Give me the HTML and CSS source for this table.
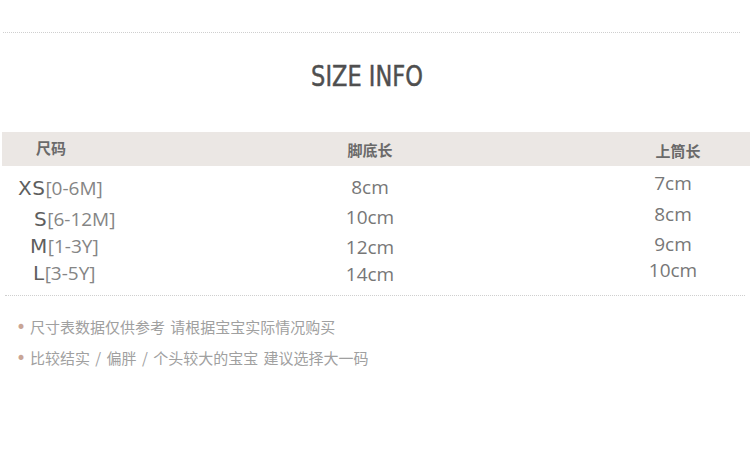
FILE: index.html
```html
<!DOCTYPE html>
<html lang="zh">
<head>
<meta charset="utf-8">
<link rel="stylesheet" href="styles.css">
</head>
<body>
<div class="page">
  <div class="rule rule-top"></div>
  <h1 class="title">SIZE INFO</h1>
  <div class="head">
    <div class="hc hc1">尺码</div>
    <div class="hc hc2">脚底长</div>
    <div class="hc hc3">上筒长</div>
  </div>
  <div class="body">
    <div class="col col1">
      <div class="cell i1"><span class="sz">XS</span><span class="age">[0-6M]</span></div>
      <div class="cell i2"><span class="sz">S</span><span class="age">[6-12M]</span></div>
      <div class="cell i3"><span class="sz">M</span><span class="age">[1-3Y]</span></div>
      <div class="cell i4"><span class="sz">L</span><span class="age">[3-5Y]</span></div>
    </div>
    <div class="col col2">
      <div class="cell">8cm</div>
      <div class="cell">10cm</div>
      <div class="cell">12cm</div>
      <div class="cell last">14cm</div>
    </div>
    <div class="col col3">
      <div class="cell first">7cm</div>
      <div class="cell">8cm</div>
      <div class="cell">9cm</div>
      <div class="cell last">10cm</div>
    </div>
  </div>
  <div class="rule rule-bottom"></div>
  <ul class="notes">
    <li><span class="dot">•</span>尺寸表数据仅供参考 请根据宝宝实际情况购买</li>
    <li><span class="dot">•</span>比较结实 / 偏胖 / 个头较大的宝宝 建议选择大一码</li>
  </ul>
</div>
</body>
</html>
```
FILE: styles.css
```css
html, body {
  margin: 0;
  padding: 0;
  background: #ffffff;
}
.page {
  width: 750px;
  height: 455px;
  overflow: hidden;
  font-family: "Open Sans", "Noto Sans CJK SC", sans-serif;
}
.rule {
  height: 0;
  border-top: 1px dotted #cfcfcf;
}
.rule-top {
  margin: 32px 10px 0 3px;
}
.title {
  margin: 29px 0 0;
  padding-right: 16px;
  height: 30px;
  line-height: 30px;
  text-align: center;
  font-family: "DejaVu Sans Condensed", "DejaVu Sans", sans-serif;
  font-weight: normal;
  font-size: 25px;
  color: #4f4f4f;
  -webkit-text-stroke: 0.4px #4f4f4f;
  transform: scaleY(1.1);
}
.head {
  margin: 40px 0 0 2px;
  height: 34px;
  background: #ebe7e4;
  display: grid;
  grid-template-columns: 248px 240px 1fr;
  align-items: center;
  font-family: "Noto Sans CJK SC", sans-serif;
  font-weight: bold;
  font-size: 15px;
  color: #6a6a6a;
}
.hc1 { padding-left: 34px; margin-top: -4px; }
.hc2 { text-align: center; }
.hc3 { text-align: center; margin-left: 106px; padding-left: 10px; margin-top: 2px; }
.body {
  height: 129px;
  display: grid;
  grid-template-columns: 250px 240px 1fr;
}
.col {
  display: flex;
  flex-direction: column;
}
.cell {
  height: 24px;
  line-height: 24px;
  white-space: nowrap;
  font-size: 19px;
  color: #777777;
}
.col1 { padding-top: 10px; gap: 3px; }
.col1 .i1 { margin-bottom: 4px; padding-left: 18px; }
.col1 .i2 { padding-left: 34px; }
.col1 .i3 { padding-left: 30px; }
.col1 .i4 { padding-left: 33px; }
.sz {
  font-family: "DejaVu Sans", sans-serif;
  font-size: 20px;
  letter-spacing: 0.5px;
  color: #5e5e5e;
}
.age {
  font-size: 19px;
  color: #858585;
}
.col2 { padding-top: 9px; gap: 6px; align-items: center; }
.col2 .last { margin-top: -3px; }
.col3 { padding-top: 5px; gap: 6px; align-items: center; width: 154px; margin-left: 106px; }
.col3 .first { margin-bottom: 1px; }
.col3 .last { margin-top: -4px; }
.rule-bottom {
  margin: 0 5px 0 5px;
}
.notes {
  list-style: none;
  margin: 20px 0 0;
  padding: 0 0 0 16px;
  display: flex;
  flex-direction: column;
  gap: 9px;
  font-family: "Noto Sans CJK SC", sans-serif;
  font-size: 15px;
  word-spacing: 2px;
  color: #a0a0a0;
}
.notes li {
  height: 22px;
  line-height: 22px;
}
.dot {
  display: inline-block;
  width: 14px;
  font-size: 17px;
  color: #c9a596;
  font-family: "DejaVu Sans", sans-serif;
}
```
